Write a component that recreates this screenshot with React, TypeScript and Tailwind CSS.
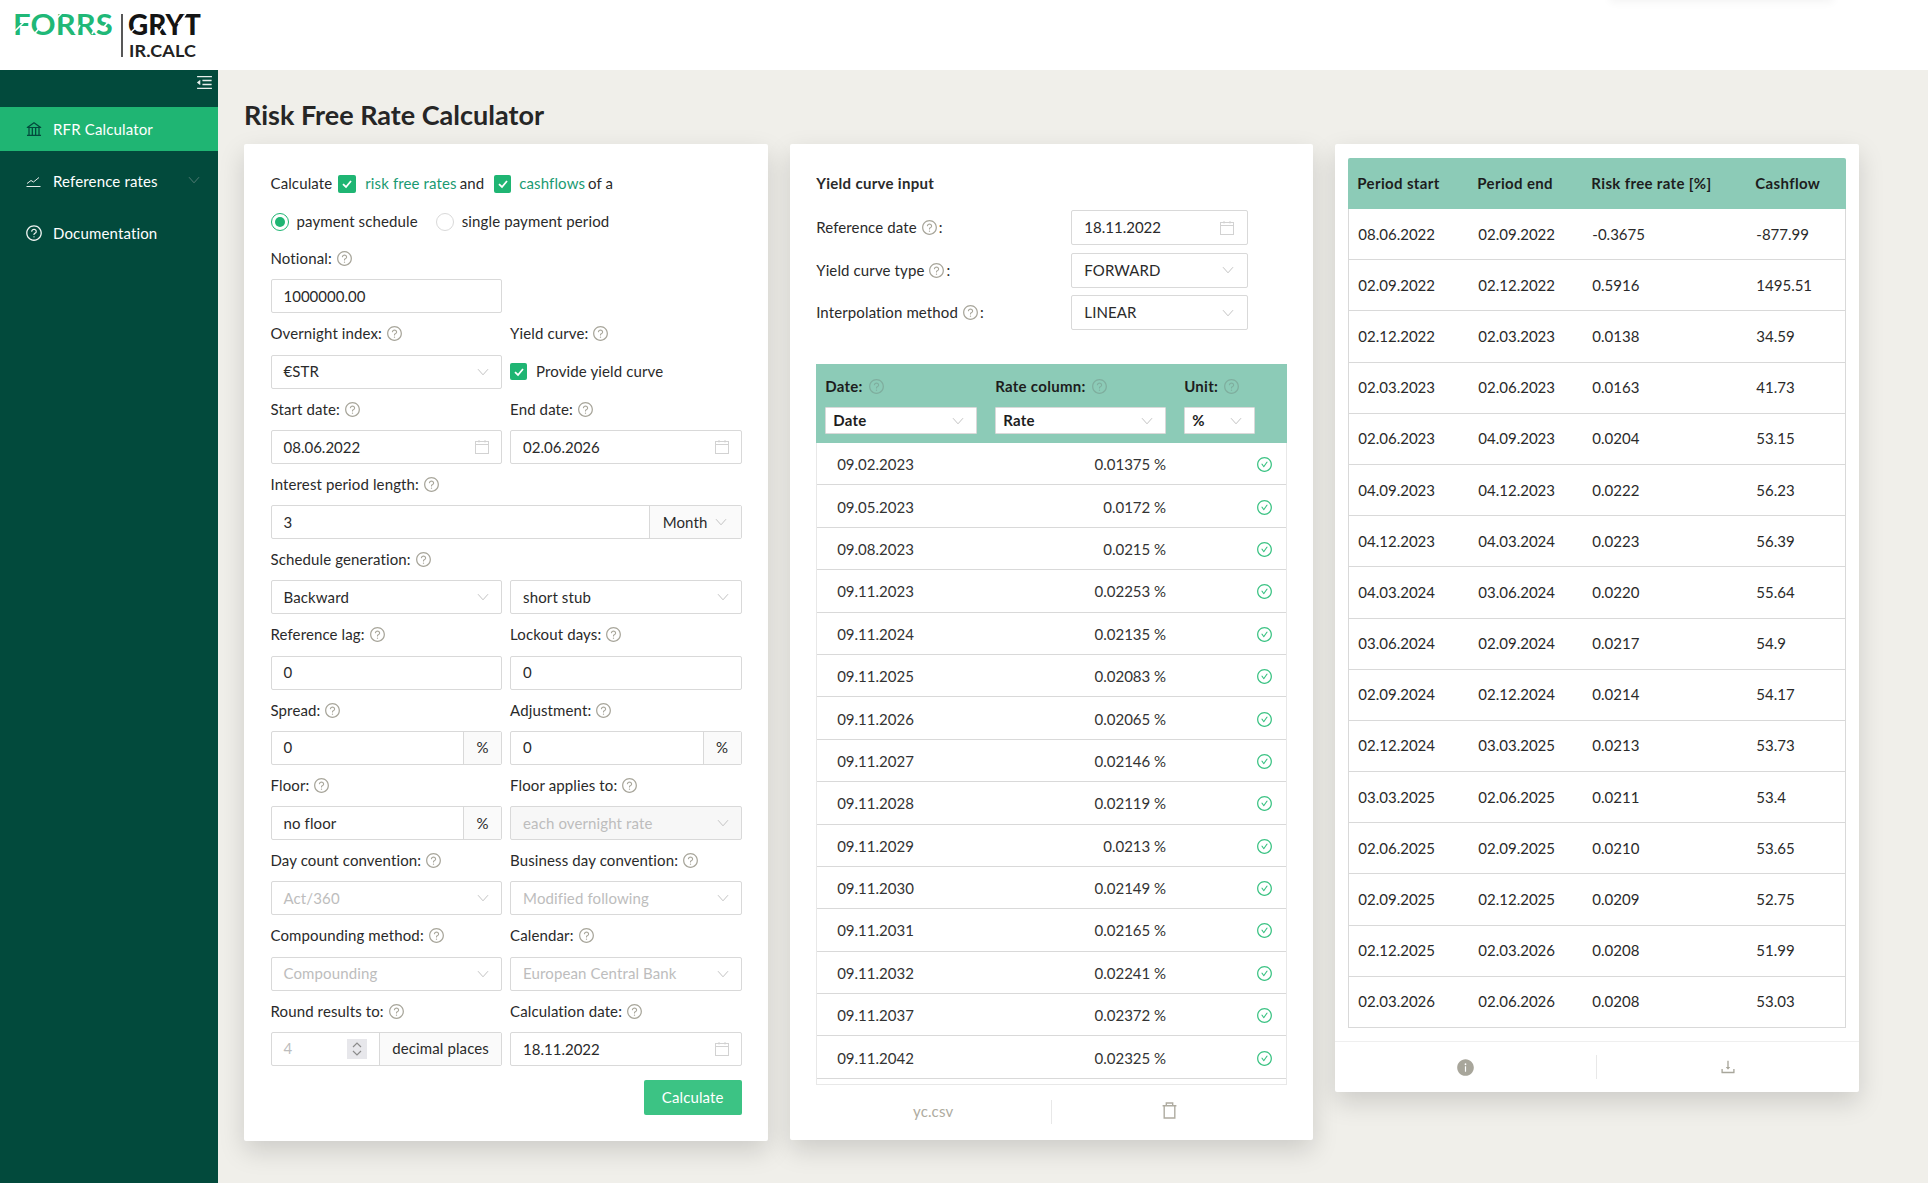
import React from "react";
import {
  AiOutlineQuestionCircle,
  AiOutlineCheckCircle,
  AiOutlineBank,
  AiOutlineMenuFold,
  AiFillInfoCircle,
  AiOutlineDownload,
} from "react-icons/ai";

const Q = ({ className = "text-[#a8a69b]" }: { className?: string }) => (
  <AiOutlineQuestionCircle className={`inline-block shrink-0 ${className}`} size={17} />
);

const Chevron = ({ className = "" }: { className?: string }) => (
  <svg viewBox="0 0 12 8" className={`w-[12px] h-[8px] shrink-0 ${className}`} fill="none" stroke="#c4c4c4" strokeWidth="1">
    <path d="M1 1.2 L6 6.8 L11 1.2" />
  </svg>
);

const Cal = () => (
  <svg viewBox="0 0 14 14" className="w-[14px] h-[14px] shrink-0" fill="none" stroke="#d2d2d2" strokeWidth="1">
    <rect x="0.5" y="1.5" width="13" height="12" />
    <path d="M0.5 4.5 H13.5 M4 0 V2.5 M10 0 V2.5" />
  </svg>
);

const Check = ({ size = "w-[18px] h-[18px]" }: { size?: string }) => (
  <span className={`inline-flex items-center justify-center rounded-[2px] bg-[#1fb573] shrink-0 ${size}`}>
    <svg viewBox="0 0 12 12" className="w-[12px] h-[12px]" fill="none" stroke="#fff" strokeWidth="1.8">
      <path d="M2 6.2 L5 9 L10 3" />
    </svg>
  </span>
);

const Label = ({ children }: { children: React.ReactNode }) => (
  <div className="h-[41.25px] flex items-center gap-[4px] text-[#2a2a2a]">{children}</div>
);

const Box = ({ children, className = "" }: { children: React.ReactNode; className?: string }) => (
  <div className={`h-[34px] flex items-center justify-between border border-[#d9d9d9] rounded-[2px] pl-[12px] pr-[12px] ${className}`}>
    {children}
  </div>
);

const Select = ({ value, disabled, bg }: { value: string; disabled?: boolean; bg?: boolean }) => (
  <Box className={bg ? "bg-[#f7f7f7]" : ""}>
    <span className={disabled ? "text-[#bdbdbd]" : "text-[#2a2a2a]"}>{value}</span>
    <Chevron />
  </Box>
);

const DateBox = ({ value }: { value: string }) => (
  <Box>
    <span className="text-[#2a2a2a] tracking-normal pt-[1px]">{value}</span>
    <Cal />
  </Box>
);

const Addon = ({ value, addon, addonWidth = "w-[38px]" }: { value: string; addon: string; addonWidth?: string }) => (
  <div className="h-[34px] flex border border-[#d9d9d9] rounded-[2px]">
    <div className="flex-1 pl-[12px] flex items-center text-[#2a2a2a]">{value}</div>
    <div className={`${addonWidth} border-l border-[#d9d9d9] bg-[#fafafa] flex items-center justify-center text-[#2a2a2a]`}>{addon}</div>
  </div>
);

const Field = ({ label, children }: { label: string; children: React.ReactNode }) => (
  <div>
    <Label>
      <span>{label}</span>
      <Q />
    </Label>
    {children}
  </div>
);

const Two = ({ children }: { children: React.ReactNode }) => <div className="grid grid-cols-2 gap-x-[8px]">{children}</div>;

const Logo = () => (
  <svg viewBox="0 0 220 70" className="w-[220px] h-[70px] block">
    <text x="13" y="35" fontFamily="Lato, sans-serif" fontWeight="700" fontSize="29" fill="#20b877" textLength="100" lengthAdjust="spacingAndGlyphs">
      FORRS
    </text>
    <g stroke="#fff" strokeWidth="1.6">
      <path d="M15 31 L25 21" />
      <path d="M35 33 L43 24" />
      <path d="M55 20 L62 13" />
      <path d="M75 34 L80 25" />
      <path d="M92 34 L97 25" />
      <path d="M103 28 L110 20" />
    </g>
    <path d="M122 14 V57" stroke="#111" strokeWidth="1.4" />
    <text x="128" y="35" fontFamily="Lato, sans-serif" fontWeight="900" fontSize="29" fill="#141414" textLength="73" lengthAdjust="spacingAndGlyphs">
      GRYT
    </text>
    <g stroke="#fff" strokeWidth="1.6">
      <path d="M130 33 L142 22" />
      <path d="M158 33 L165 24" />
      <path d="M178 24 L186 14" />
    </g>
    <text x="129" y="57" fontFamily="Lato, sans-serif" fontWeight="700" fontSize="17" fill="#222" textLength="67" lengthAdjust="spacingAndGlyphs">
      IR.CALC
    </text>
  </svg>
);

const curve = [
  ["09.02.2023", "0.01375"],
  ["09.05.2023", "0.0172"],
  ["09.08.2023", "0.0215"],
  ["09.11.2023", "0.02253"],
  ["09.11.2024", "0.02135"],
  ["09.11.2025", "0.02083"],
  ["09.11.2026", "0.02065"],
  ["09.11.2027", "0.02146"],
  ["09.11.2028", "0.02119"],
  ["09.11.2029", "0.0213"],
  ["09.11.2030", "0.02149"],
  ["09.11.2031", "0.02165"],
  ["09.11.2032", "0.02241"],
  ["09.11.2037", "0.02372"],
  ["09.11.2042", "0.02325"],
];

const flows = [
  ["08.06.2022", "02.09.2022", "-0.3675", "-877.99"],
  ["02.09.2022", "02.12.2022", "0.5916", "1495.51"],
  ["02.12.2022", "02.03.2023", "0.0138", "34.59"],
  ["02.03.2023", "02.06.2023", "0.0163", "41.73"],
  ["02.06.2023", "04.09.2023", "0.0204", "53.15"],
  ["04.09.2023", "04.12.2023", "0.0222", "56.23"],
  ["04.12.2023", "04.03.2024", "0.0223", "56.39"],
  ["04.03.2024", "03.06.2024", "0.0220", "55.64"],
  ["03.06.2024", "02.09.2024", "0.0217", "54.9"],
  ["02.09.2024", "02.12.2024", "0.0214", "54.17"],
  ["02.12.2024", "03.03.2025", "0.0213", "53.73"],
  ["03.03.2025", "02.06.2025", "0.0211", "53.4"],
  ["02.06.2025", "02.09.2025", "0.0210", "53.65"],
  ["02.09.2025", "02.12.2025", "0.0209", "52.75"],
  ["02.12.2025", "02.03.2026", "0.0208", "51.99"],
  ["02.03.2026", "02.06.2026", "0.0208", "53.03"],
];

const cardClass = "bg-white rounded-[2px] shadow-[0_10px_26px_rgba(0,0,0,0.15)]";

const FlowCols = "grid grid-cols-[120px_114px_164px_1fr] pl-[9px] items-center";

export default function App() {
  return (
    <div className="w-[1928px] h-[1183px] overflow-hidden flex flex-col [font-family:Lato,sans-serif] text-[15px] leading-none tracking-[0.12px] text-[#2a2a2a]">
      <header className="relative h-[70px] bg-white shrink-0">
        <Logo />
        <div className="absolute left-[1610px] -top-[12px] w-[223px] h-[12px] shadow-[0_2px_10px_rgba(0,0,0,0.05)]" />
      </header>
      <div className="flex-1 flex min-h-0">
        <aside className="w-[218px] shrink-0 bg-[#024a3c] text-white">
          <div className="h-[37px] flex justify-end items-center pr-[4px] pb-[12px]">
            <AiOutlineMenuFold size={19} className="text-[#e8efec]" />
          </div>
          <div className="flex flex-col gap-[8px] tracking-[0.15px]">
            <div className="h-[44px] bg-[#1fb573] flex items-center pl-[26px] gap-[12px]">
              <AiOutlineBank size={18} className="text-[#024a3c] -m-[1.5px]" />
              <span>RFR Calculator</span>
            </div>
            <div className="h-[44px] flex items-center pl-[26px] gap-[12px]">
              <svg viewBox="0 0 15 15" className="w-[15px] h-[15px]" fill="none" stroke="#e6ecea" strokeWidth="1">
                <path d="M1 9.5 L5 6.5 L7.5 8 L13 3.5" />
                <path d="M0.5 12.5 H14.5" />
              </svg>
              <span>Reference rates</span>
              <Chevron className="ml-[18px] w-[10px] h-[6px] opacity-40 -mt-[3px]" />
            </div>
            <div className="h-[44px] flex items-center pl-[26px] gap-[12px]">
              <AiOutlineQuestionCircle size={18} className="text-[#f0f4f2] -m-[1.5px]" />
              <span>Documentation</span>
            </div>
          </div>
        </aside>
        <main className="flex-1 bg-[#f0efea] pl-[26px] pr-[69px]">
          <h1 className="h-[74px] pt-[14px] flex items-center text-[27px] tracking-normal font-bold text-[#262626]">Risk Free Rate Calculator</h1>
          <div className="grid grid-cols-3 gap-[22px] items-start">
            {/* Form */}
            <section className={`${cardClass} pl-[26.5px] pr-[26px] pt-[26px] pb-[26px] h-[997px]`}>
              <div className="h-[27px] flex items-center">
                <span>Calculate</span>
                <Check size="w-[18px] h-[18px] ml-[6px]" />
                <span className="ml-[9px] text-[#1a9a72]">risk free rates</span>
                <span className="ml-[3px]">and</span>
                <Check size="w-[17px] h-[18px] ml-[10px]" />
                <span className="ml-[8px] text-[#1a9a72]">cashflows</span>
                <span className="ml-[3px]">of a</span>
              </div>
              <div className="h-[27px] mt-[11px] flex items-center">
                <span className="w-[18px] h-[18px] rounded-full border border-[#1fb573] flex items-center justify-center">
                  <span className="w-[10px] h-[10px] rounded-full bg-[#1fb573]" />
                </span>
                <span className="ml-[8px]">payment schedule</span>
                <span className="ml-[18px] w-[18px] h-[18px] rounded-full border border-[#d9d9d9]" />
                <span className="ml-[8px]">single payment period</span>
              </div>
              <div className="mt-[3px]">
                <Two>
                  <Field label="Notional:">
                    <Box>
                      <span className="tracking-normal">1000000.00</span>
                    </Box>
                  </Field>
                </Two>
                <Two>
                  <Field label="Overnight index:">
                    <Select value="€STR" />
                  </Field>
                  <Field label="Yield curve:">
                    <div className="h-[34px] flex items-center gap-[9px]">
                      <Check size="w-[17px] h-[17px]" />
                      Provide yield curve
                    </div>
                  </Field>
                </Two>
                <Two>
                  <Field label="Start date:">
                    <DateBox value="08.06.2022" />
                  </Field>
                  <Field label="End date:">
                    <DateBox value="02.06.2026" />
                  </Field>
                </Two>
                <Field label="Interest period length:">
                  <div className="h-[34px] flex border border-[#d9d9d9] rounded-[2px]">
                    <div className="flex-1 pl-[12px] flex items-center">3</div>
                    <div className="w-[92px] border-l border-[#d9d9d9] bg-[#fafafa] flex items-center justify-between pl-[13px] pr-[14px]">
                      Month <Chevron className="w-[10px]" />
                    </div>
                  </div>
                </Field>
                <Field label="Schedule generation:">
                  <div className="grid grid-cols-2 gap-x-[8px]">
                    <Select value="Backward" />
                    <Select value="short stub" />
                  </div>
                </Field>
                <Two>
                  <Field label="Reference lag:">
                    <Box>0</Box>
                  </Field>
                  <Field label="Lockout days:">
                    <Box>0</Box>
                  </Field>
                </Two>
                <Two>
                  <Field label="Spread:">
                    <Addon value="0" addon="%" />
                  </Field>
                  <Field label="Adjustment:">
                    <Addon value="0" addon="%" />
                  </Field>
                </Two>
                <Two>
                  <Field label="Floor:">
                    <Addon value="no floor" addon="%" />
                  </Field>
                  <Field label="Floor applies to:">
                    <Select value="each overnight rate" disabled bg />
                  </Field>
                </Two>
                <Two>
                  <Field label="Day count convention:">
                    <Select value="Act/360" disabled />
                  </Field>
                  <Field label="Business day convention:">
                    <Select value="Modified following" disabled />
                  </Field>
                </Two>
                <Two>
                  <Field label="Compounding method:">
                    <Select value="Compounding" disabled />
                  </Field>
                  <Field label="Calendar:">
                    <Select value="European Central Bank" disabled />
                  </Field>
                </Two>
                <Two>
                  <Field label="Round results to:">
                    <div className="h-[34px] flex border border-[#d9d9d9] rounded-[2px]">
                      <div className="flex-1 pl-[12px] pr-[12px] flex items-center justify-between text-[#bdbdbd]">
                        4
                        <span className="w-[20px] h-[20px] bg-[#e7e7eb] flex flex-col items-center justify-center gap-[2px]">
                          <svg viewBox="0 0 10 6" className="w-[10px] h-[6px]" fill="none" stroke="#8c8c8c" strokeWidth="1.2">
                            <path d="M1 5 L5 1 L9 5" />
                          </svg>
                          <svg viewBox="0 0 10 6" className="w-[10px] h-[6px]" fill="none" stroke="#8c8c8c" strokeWidth="1.2">
                            <path d="M1 1 L5 5 L9 1" />
                          </svg>
                        </span>
                      </div>
                      <div className="w-[122px] border-l border-[#d9d9d9] bg-[#fafafa] flex items-center justify-center">decimal places</div>
                    </div>
                  </Field>
                  <Field label="Calculation date:">
                    <DateBox value="18.11.2022" />
                  </Field>
                </Two>
                <div className="flex justify-end mt-[14px]">
                  <button className="w-[98px] h-[35px] bg-[#3cc384] rounded-[2px] text-white text-[15px]">Calculate</button>
                </div>
              </div>
            </section>

            {/* Yield curve */}
            <section className={`${cardClass} h-[996px] flex flex-col`}>
              <div className="pl-[26.5px] pr-[26px] pt-[26px] flex-1 min-h-0 flex flex-col">
                <div className="h-[27px] flex items-center font-bold tracking-[0.3px]">Yield curve input</div>
                <div className="mt-[13px] flex flex-col gap-[7.5px]">
                  {[
                    ["Reference date", "18.11.2022", "date"],
                    ["Yield curve type", "FORWARD", "sel"],
                    ["Interpolation method", "LINEAR", "sel"],
                  ].map(([label, value, kind]) => (
                    <div key={label} className="flex items-center justify-between pr-[39px]">
                      <span className="flex items-center">
                        <span>{label}</span>
                        <Q className="text-[#a8a69b] ml-[4px]" />
                        <span className="ml-[1px]">:</span>
                      </span>
                      <div className="w-[177px] h-[35px] flex items-center justify-between border border-[#d9d9d9] rounded-[2px] pl-[12px] pr-[13px]">
                        <span className={kind === "date" ? "tracking-normal" : ""}>{value}</span>
                        {kind === "date" ? <Cal /> : <Chevron />}
                      </div>
                    </div>
                  ))}
                </div>
                <div className="mt-[34px] h-[79px] bg-[#8ccbb7] pl-[9px] flex gap-[18px] font-bold tracking-[0.3px] text-[#1d1d1d] shrink-0">
                  {[
                    ["Date:", "Date", "w-[152px]"],
                    ["Rate column:", "Rate", "w-[171px]"],
                    ["Unit:", "%", "w-[71px]"],
                  ].map(([label, value, w]) => (
                    <div key={label} className={w}>
                      <div className="h-[43px] pt-[1px] flex items-center gap-[5px]">
                        <span>{label}</span>
                        <Q className="text-[#7fae9e]" />
                      </div>
                      <div className="h-[27px] bg-white border border-[#d9d9d9] rounded-[1px] flex items-center justify-between pl-[7px] pr-[12px]">
                        {value}
                        <Chevron />
                      </div>
                    </div>
                  ))}
                </div>
                <div className="border-x border-b border-[#e8e8e8] flex-1 min-h-0 overflow-hidden">
                  {curve.map(([d, r]) => (
                    <div key={d} className="h-[42.4px] border-b border-[#d9d9d9] flex items-center pl-[20px] pr-[13px] pt-[2px] text-[#333] tracking-normal">
                      <span className="w-[120px]">{d}</span>
                      <span className="w-[209px] text-right">{r} %</span>
                      <span className="flex-1 flex justify-end">
                        <AiOutlineCheckCircle size={17} className="text-[#3cc384]" />
                      </span>
                    </div>
                  ))}
                </div>
              </div>
              <div className="h-[55px] mx-[26px] flex items-center shrink-0 pb-[2px]">
                <div className="w-[236px] h-[24px] border-r border-[#e8e8e8] flex items-center justify-center text-[#aeaba0]">yc.csv</div>
                <div className="flex-1 flex justify-center pb-[2px]">
                  <svg viewBox="0 0 16 16" className="w-[17px] h-[17px]" fill="none" stroke="#aeaba0" strokeWidth="1.3">
                    <path d="M1.5 3.5 H14.5 M5 3.5 V1 H11 V3.5 M3 3.5 V15 H13 V3.5" />
                  </svg>
                </div>
              </div>
            </section>

            {/* Results */}
            <section className={`${cardClass} h-[948px] flex flex-col`}>
              <div className="px-[13px] pt-[14px] pb-[13px] border-b border-[#efefef]">
                <div className={`${FlowCols} h-[51px] bg-[#8ccbb7] font-bold tracking-[0.35px] text-[#1d1d1d] rounded-t-[2px]`}>
                  <span>Period start</span>
                  <span>Period end</span>
                  <span>Risk free rate [%]</span>
                  <span>Cashflow</span>
                </div>
                <div className="border-x border-[#d9d9d9]">
                  {flows.map((row) => (
                    <div key={row[0]} className={`${FlowCols} h-[51.2px] border-b border-[#d9d9d9] text-[#2a2a2a] tracking-normal`}>
                      {row.map((c, i) => (
                        <span key={i}>{c}</span>
                      ))}
                    </div>
                  ))}
                </div>
              </div>
              <div className="flex-1 flex items-center">
                <div className="w-1/2 h-[24px] border-r border-[#e8e8e8] flex items-center justify-center">
                  <AiFillInfoCircle size={19} className="text-[#a8a69b]" />
                </div>
                <div className="w-1/2 flex items-center justify-center">
                  <AiOutlineDownload size={18} className="text-[#a8a69b]" />
                </div>
              </div>
            </section>
          </div>
        </main>
      </div>
    </div>
  );
}
